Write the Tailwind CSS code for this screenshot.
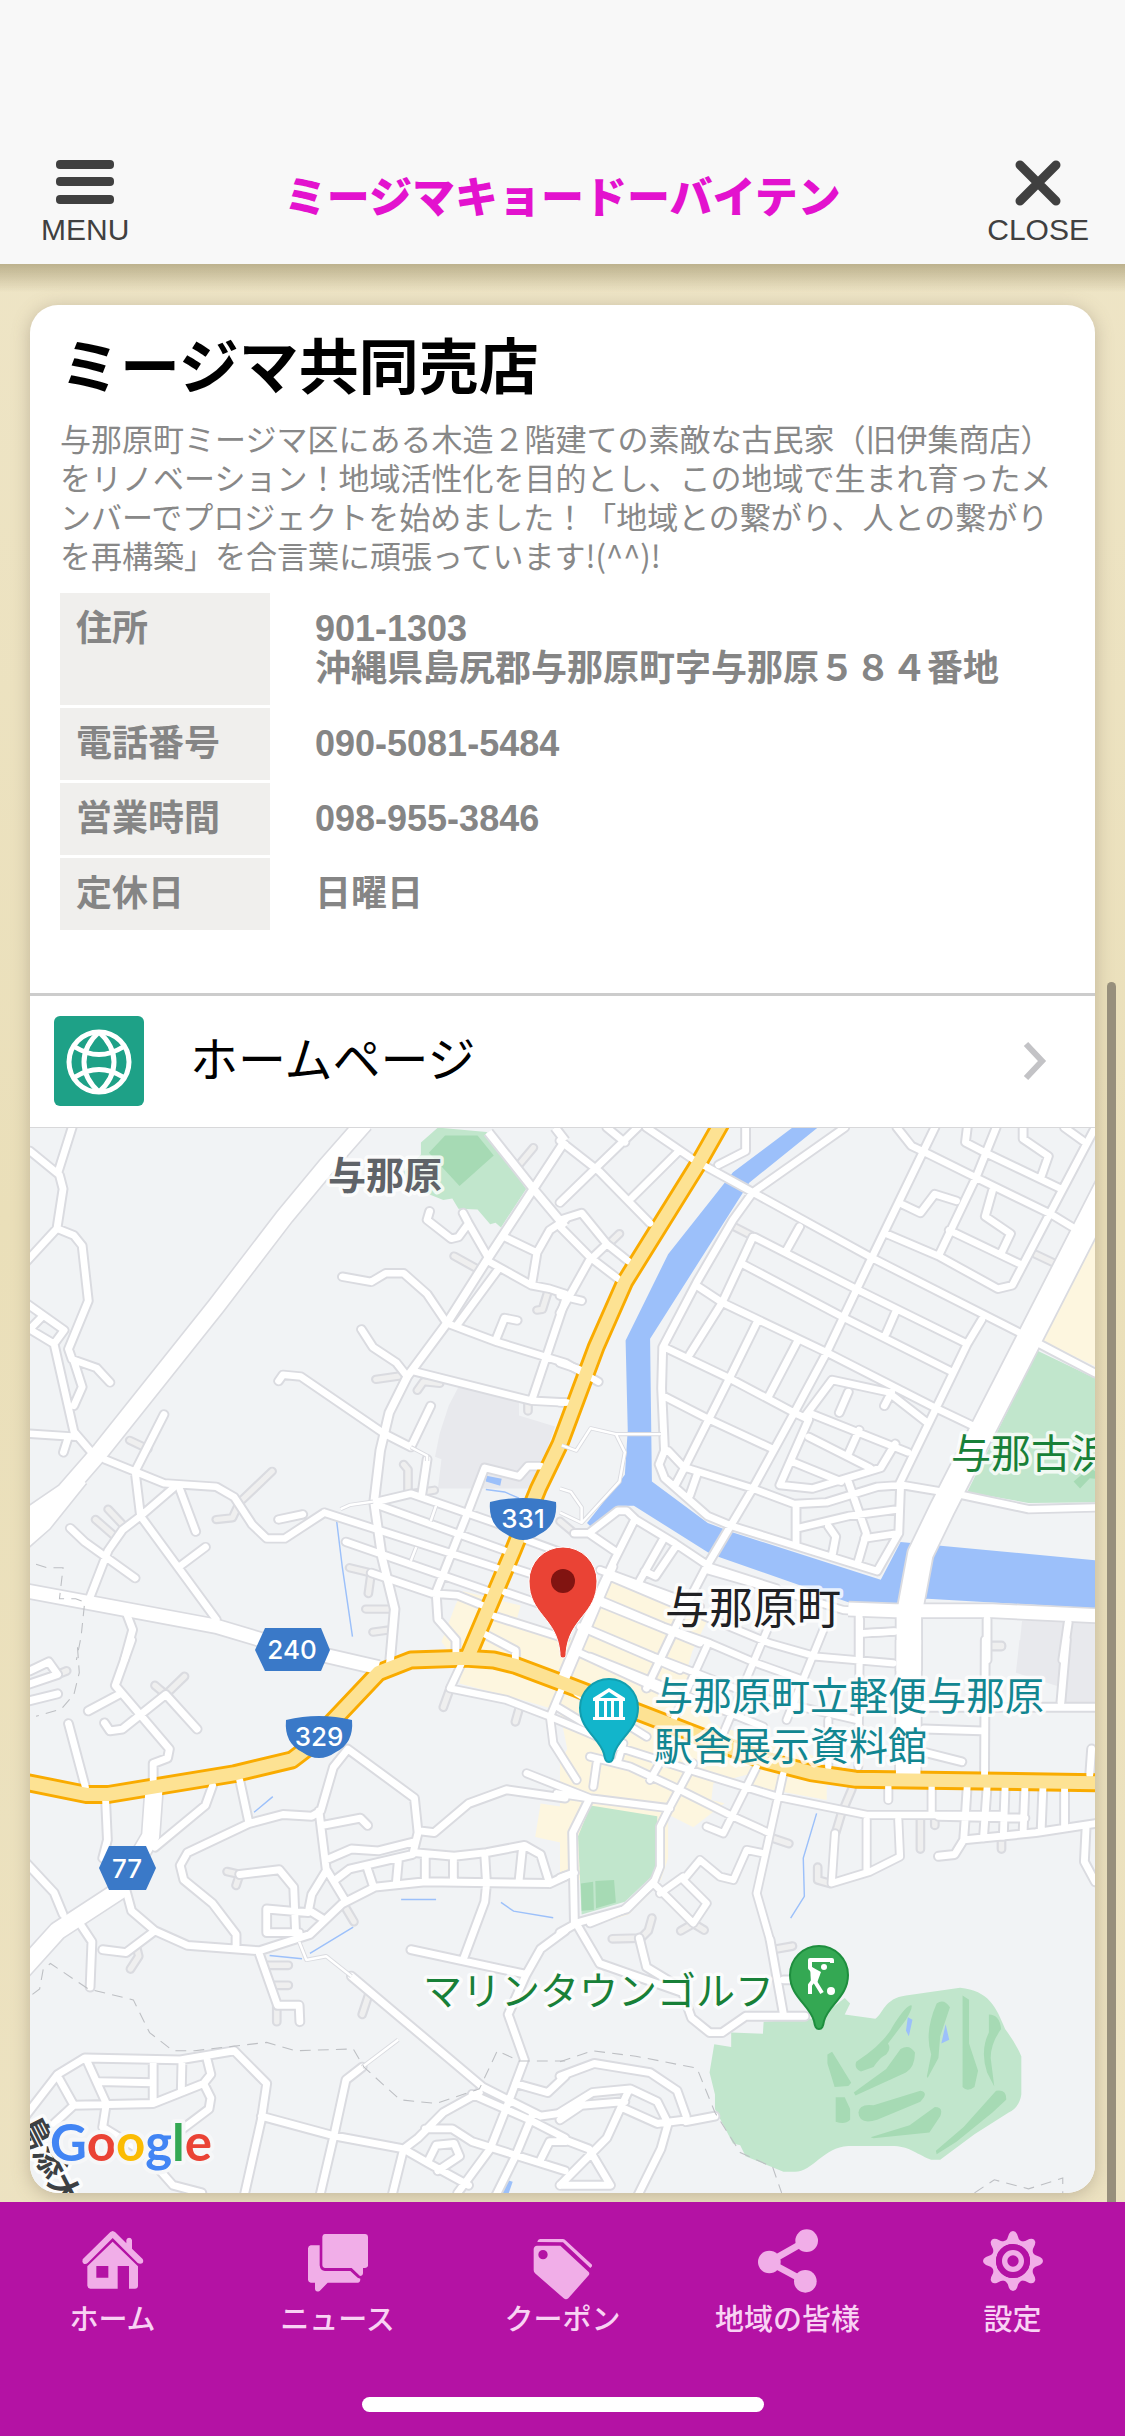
<!DOCTYPE html>
<html lang="ja">
  <head>
    <meta charset="utf-8">
    <meta name="viewport" content="width=device-width, initial-scale=1.0">
    <title>ミージマ共同売店</title>
    <script src="https://cdn.jsdelivr.net/npm/@tailwindcss/browser@4"></script>
  </head>

  <body class="min-h-screen bg-[#ece2c1] bg-linear-to-b from-[#efe6c9] via-[#eadfb9] to-[#ede3c3] font-['Liberation_Sans','Noto_Sans_CJK_JP',sans-serif]">

    <header class="fixed top-0 inset-x-0 z-10 h-[264px] bg-[#f8f8f8] flex items-end justify-between pl-[41px] pr-9 pb-4 text-[#404040]">
      <button type="button" class="flex flex-col items-center gap-1.5">
        <svg class="w-[58px] h-[46px]" viewBox="0 0 58 46" fill="currentColor"><rect y="0" width="58" height="9" rx="4"/><rect y="17" width="58" height="9" rx="4"/><rect y="35" width="58" height="9" rx="4"/></svg>
        <span class="text-[30px] leading-9">MENU</span>
      </button>
      <h1 class="mb-5 pl-2 text-[43px] leading-[60px] font-black text-[#e312ce]">ミージマキョードーバイテン</h1>
      <button type="button" class="flex flex-col items-center gap-1.5">
        <svg class="w-[46px] h-[46px]" viewBox="0 0 46 46" fill="none" stroke="currentColor" stroke-width="9" stroke-linecap="round"><path d="M5 5L41 41M41 5L5 41"/></svg>
        <span class="text-[30px] leading-9">CLOSE</span>
      </button>
      <div class="absolute top-full inset-x-0 h-7 bg-linear-to-b from-[#9b8f68]/60 to-transparent"></div>
    </header>

    <main class="pt-[305px] px-[30px] pb-[243px]">
      <article class="bg-white rounded-[28px] overflow-hidden shadow-[0_3px_18px_rgba(110,95,80,0.35)]">
        <div class="px-[30px] pt-7 pb-[60px]">
          <h2 class="text-[60px] leading-[72px] font-bold text-black">ミージマ共同売店</h2>
          <p class="mt-[13px] text-[31px] leading-[39px] text-[#888] whitespace-nowrap font-['Noto_Sans_CJK_JP',sans-serif]">与那原町ミージマ区にある木造２階建ての素敵な古民家（旧伊集商店）<br>をリノベーション！地域活性化を目的とし、この地域で生まれ育ったメ<br>ンバーでプロジェクトを始めました！「地域との繋がり、人との繋がり<br>を再構築」を合言葉に頑張っています!(^^)!</p>
          <table class="mt-4 w-full border-separate border-spacing-x-0 border-spacing-y-[3px] text-[36px] leading-10 text-[#858585] font-bold text-left">
            <tr>
              <th scope="row" class="w-[210px] bg-[#f0efed] px-4 py-4 align-top">住所</th>
              <td class="pl-[45px] py-4 whitespace-nowrap">901-1303<br>沖縄県島尻郡与那原町字与那原５８４番地</td>
            </tr>
            <tr>
              <th scope="row" class="bg-[#f0efed] px-4 py-4">電話番号</th>
              <td class="pl-[45px] py-4">090-5081-5484</td>
            </tr>
            <tr>
              <th scope="row" class="bg-[#f0efed] px-4 py-4">営業時間</th>
              <td class="pl-[45px] py-4">098-955-3846</td>
            </tr>
            <tr>
              <th scope="row" class="bg-[#f0efed] px-4 py-4">定休日</th>
              <td class="pl-[45px] py-4">日曜日</td>
            </tr>
          </table>
        </div>

        <a href="#homepage" class="flex items-center h-[135px] pl-6 pr-12 pb-0.5 border-t-3 border-t-[#ccc] border-b border-b-[#d8d8da] text-black">
          <svg class="w-[90px] h-[90px] rounded-md bg-[#1ea187]" viewBox="0 0 90 90" fill="none" stroke="#fff" stroke-width="5"><circle cx="45" cy="46" r="30"/><path d="M45 16C25 34 25 58 45 76M45 16C65 34 65 58 45 76M21 31Q45 46 69 31M21 61Q45 46 69 61"/></svg>
          <span class="ml-[46px] flex-1 text-[48px] leading-none">ホームページ</span>
          <svg class="w-6 h-10" viewBox="0 0 24 40" fill="none" stroke="#c3c3c6" stroke-width="6"><path d="M3 3L19 20L3 37"/></svg>
        </a>

        <svg class="block w-full aspect-square bg-[#f1f3f5]" viewBox="0 0 1065 1065" role="img" aria-label="地図">
          <defs>
            <g id="minor" fill="none" stroke-linecap="round" stroke-linejoin="round">
              <!-- north west -->
              <path transform="translate(-30 -8) scale(.3604 .3444)" d="M83 90L165 160L175 200L158 315L205 335L228 365L245 525L190 665L200 695L268 720L305 762M200 22L160 155M158 315L70 415M70 530L178 610L150 650L70 600M118 570L90 600M150 650L205 905L250 960M205 700L228 775L205 830M70 910L210 920M188 925L176 965M290 985L455 1055L600 1065L650 1095L700 1175L740 1215L790 1215L900 1140M455 855L375 1020L390 1150L600 1450M490 1060L390 1150L340 1190L300 1250L250 1385M195 1185L235 1225L375 1330M500 1075L543 1195M500 1295L570 1240M773 1160L840 1145M950 455L1030 470L1070 445L1120 445L1185 505L1240 590M1003 608L1035 660L1100 705L1130 745M773 758L785 740L835 745L1065 910L1140 950M1195 830L1140 950M1185 985L1170 1090M1385 430L1265 600M1192 265L1185 290L1252 345L1272 340L1300 300M1285 270L1300 300L1355 400M1400 340L1490 385L1475 480L1355 410M1475 480L1525 490L1568 505M1490 385L1525 320L1568 290M1568 525L1475 815M1240 590L1380 645L1568 705L1660 760M1375 640L1400 575L1435 582M1150 730L1475 815L1568 820M1040 1110L1140 1085L1430 1190M1040 1115L1400 1250M900 1140L1390 1305M960 1225L1360 1370M1030 1315L1200 1375L1270 1380L1340 1410M1500 1005L1465 1005L1440 1035L1345 1010L1290 1160L1210 1370L1215 1450L1265 1510L1265 1550M1420 1300L1568 1350M1400 1370L1568 1430M1370 1440L1568 1505M1340 1490L1430 1540L1430 1568M1450 1215L1568 1260M350 1430L368 1480L345 1568"/>
              <!-- north east -->
              <path transform="translate(530 -8) scale(.3604 .3444)" d="M790 22L535 210L480 290L380 470L285 660L282 780L290 960L275 1000L290 1040L410 1150L480 1180L880 1310L940 1200L945 1060M240 22L370 115L535 210L865 400L1280 620M540 340L820 490L1130 650M510 420L790 575L1085 730M385 485L450 530L740 675L1040 835L1150 890M290 660L470 750L650 850L690 870M285 800L415 870L590 955M350 1010L535 1070L650 1115L740 1110L880 1065L950 1060L1120 1090M935 22L975 75L1015 95L1160 170L1365 275L1420 310M1180 95L1390 200M1400 22L1450 60M905 330L1050 395L1215 490L1255 480L1350 290L1485 22M1080 320L1280 420M1040 22L865 400L740 675L650 850L535 1070L410 1290L340 1430L240 1650M1210 22L1155 165L1050 395M1170 580L1130 650L940 1060M535 340L450 530L360 680M550 580L470 750L345 1010L320 1060M660 640L580 800M665 310L625 385M930 560L905 620M680 860L755 755L910 790L1020 880M690 850L965 965M800 790L775 850M920 790L900 830M830 900L800 970M690 870L610 1060L700 1070L890 1010L930 940M640 990L780 1050M690 920L860 1010M800 1050L850 1200L825 1290M655 1115L655 1230M660 1185L800 1150L940 1130M745 1180L765 1210L755 1265M845 1215L940 1200M380 1030L360 1090M300 960L345 1010M950 245L1000 270L1040 215L1100 235M1200 205L1180 280L1250 330L1225 385M1130 22L1125 65L1180 95M1285 22L1285 55L1355 105L1335 165M1330 650L1485 735M1120 1090L1300 1130L1485 1125M0 60L110 150L250 300M215 22L0 240M330 90L200 225M130 22L180 65M0 290L60 270L130 360L190 410M0 310L85 400L160 460M130 360L80 410L0 560M0 510L60 525M0 705L55 725M0 820L20 820M515 22L515 90L440 130M80 1200L160 1135L185 1135L210 1160L320 1230L420 1300L600 1360M205 1165L150 1280L60 1480L0 1630M285 1220L220 1340M320 1240L265 1325L235 1310M40 1200L80 1200L150 1250M830 1440L830 1568M840 1490L930 1485M1185 1450L1185 1568M1410 1460L1395 1568"/>
              <!-- town centre -->
              <path transform="translate(560 432) scale(.3333)" d="M60 50L250 130L540 250L680 290L910 310M30 120L220 200L360 250L500 310L640 360M0 210L190 290L320 340L500 410L800 480M0 290L150 350L520 500M350 260L250 480M540 190L400 520M700 210L590 480M810 180L805 620M60 40L0 180M820 220L910 215M350 30L560 90L760 150L920 160M0 520L80 560L300 630L560 710L830 765L1240 765M0 590L120 620L270 690L430 770L540 820M-100 700L0 715L240 745M310 610L240 740L210 800L210 920L190 970L100 1050L0 1090M500 620L400 820L350 800M580 640L540 820L500 1000L540 1140M220 590L180 660M100 550L85 600M20 610L10 680M190 970L310 1090L350 1030L280 960L330 900L390 950L430 960L470 870L520 880M210 1000L280 950M735 820L725 970L840 935L930 890L925 780M830 780L830 930M1025 680L1025 760M895 680L895 720M715 480L715 620M-100 440L0 500M-190 640L0 715"/>
              <!-- below route 331 -->
              <path transform="translate(350 332) scale(.3333)" d="M250 600L210 685L380 720L510 770L630 820M700 320L510 770L520 850L590 960M590 700L800 830M660 330L960 440M640 420L960 550M600 500L900 630M580 570L840 690"/>
              <!-- south west -->
              <path transform="translate(-30 512) scale(.3604 .3635)" d="M365 0L320 125L470 300L465 325L425 340L425 385M245 195L330 150M290 228L305 250L340 245L460 150L547 245M190 230L237 405M83 85L135 60L160 95L70 125M70 170L160 148M293 440L298 550L285 600M590 400L570 455L430 570M665 385L690 500M655 840L655 810L590 725L510 660L500 620L520 585L690 505L785 480L865 485L890 470L925 350L965 300L1150 435L1160 530L1145 590L970 630L930 660M1165 525L1205 530L1300 450L1405 412L1568 435M885 470L905 630L960 720M895 510L1000 490L1020 510M905 605L975 575L1050 580L1150 555M1150 585L1260 595L1350 585L1455 565L1500 590L1525 670L1180 665L1040 680L950 725L860 810L720 855L520 840L430 800L365 745L350 690M1020 630L1035 675M1105 610L1100 665M1180 590V665M1258 595V665M1345 590L1350 670M1450 570L1440 665M1525 670L1568 650M905 635L865 700L855 750L740 740L740 805L830 805M665 645L775 632L815 680L820 800M860 745L900 770M1350 670L1345 720L1285 880M1140 852L1460 920L1500 850L1568 800M1460 920L1410 1030L1455 1155L1400 1300L1360 1400L1270 1521M430 800L350 860L285 852M70 610L150 695L175 755M215 770L255 830L250 955M720 865L770 1005L830 1005L832 1050M975 925L1340 1230M1005 1175L960 1210L925 1370L885 1540M70 1310L160 1195L235 1150L500 1155L650 1130L740 1220L725 1320L675 1540M725 1310L930 1365L1120 1400L1190 1440L1300 1500M160 1200L205 1280L425 1275L565 1220L585 1260L580 1290L500 1350M575 1155L585 1195L565 1220M505 1155L503 1240M425 1160V1275M240 1155L295 1275L285 1340M275 1215L425 1218M205 1280L150 1330M285 1340L400 1410L480 1500L560 1521M1340 1230L1500 1310L1568 1300M1330 1245L1230 1300L1160 1370L1120 1400L1085 1540M1310 1250L1470 1320L1568 1370M1180 1345L1255 1345L1310 1380L1568 1460M1190 1430L1210 1390L1260 1385L1275 1420L1215 1460M1480 1300L1430 1420L1370 1540M1430 1220L1520 1245L1568 1200M1500 1430L1525 1380L1568 1380"/>
              <!-- south east -->
              <path transform="translate(530 512) scale(.3604 .3635)" d="M1130 400L1125 480L1120 550L1095 590L1050 595M1120 550L1320 530L1485 505M1050 485L1290 490M1185 405L1175 545M1235 405L1230 540M1290 405L1285 530M1340 405L1335 525M1400 405V515M1460 510L1455 610L1485 665M1180 0L1178 370M1405 0L1390 170M1010 185H1490M1010 245L1170 250M1015 310L1115 335M1475 300L1470 370M80 440L35 530L40 780L185 740L260 665M0 655L40 640M0 805L45 780L110 890L340 970L365 1040L415 1080L450 1080L515 1035L680 1035M220 820L240 900L340 960M583 825L620 1030M620 935H650M0 1200L95 1165L250 1190L325 1240L350 1310M350 1325L430 1310M0 1300L90 1245L195 1235L270 1270L300 1330L280 1400L210 1540M190 1240L130 1370L0 1500M0 1370L80 1400L140 1500L0 1500M180 1290L270 1330L350 1320M0 1320L60 1280L180 1270"/>
            </g>
            <g id="local" fill="none" stroke-linejoin="round">
              <path transform="translate(-30 -8) scale(.3604 .3444)" d="M1568 60L1480 200L1355 400L1240 590L1130 745L1080 850L1055 960L1038 1110L1060 1270L1095 1420L1080 1600M1355 35L1480 200L1568 310M1540 22L1568 60"/>
            </g>
            <g id="alleys" fill="none" stroke-linecap="round" stroke-linejoin="round">
              <path transform="translate(-30 -8) scale(.3604 .3444)" d="M1260 395L1320 430M1480 80L1440 130M1520 500L1505 550L1490 552M1043 753L1130 740M1158 785L1175 760L1220 765M755 1020L665 1110L645 1155L600 1160M360 930L410 955M1120 1000L1132 1015V1080M1205 1075L1140 1085M300 1130L345 1180M265 1160L320 1210M970 1300L1030 1315L1022 1375M1015 1420H1090M1035 1487L1085 1480M1465 820V845"/>
              <path transform="translate(-30 512) scale(.3604 .3635)" d="M430 125L460 150L512 100M1250 130L1230 185M1440 190L1430 225M630 637L665 645L655 675M380 850L385 870L362 905M740 895H800M760 950H800M768 1005V1050M1025 970L1005 1030M955 730L982 775M160 95L185 85"/>
              <path transform="translate(530 512) scale(.3604 .3635)" d="M145 822L225 820L245 800L255 765M335 800L370 780L400 798M590 545L635 560M600 850L645 842M715 625V660L750 670M1000 490V575M1040 490V510M1225 550V575M1200 18H1225M810 410L780 480L765 530"/>
              <path transform="translate(530 -8) scale(.3604 .3444)" d="M165 330L130 365M1200 1525H1225M480 308L540 340M1320 390L1370 415M40 1200L0 1165"/>
            </g>
            <g id="prefectural" fill="none" stroke-linejoin="round">
              <path transform="translate(-30 -8) scale(.3604 .3444)" d="M60 1365L600 1470L760 1520L1050 1590"/>
              <path transform="translate(530 -8) scale(.3604 .3444)" d="M800 1420L930 1425L1200 1425L1500 1440"/>
            </g>
            <g id="major" fill="none" stroke-linejoin="round">
              <path transform="translate(-30 -8) scale(.3604 .3444)" d="M1010 10L905 135L790 280L600 540L280 960L180 1080L60 1165M220 1040L120 1170L60 1225"/>
              <path transform="translate(-30 512) scale(.3604 .3635)" d="M428 400L418 540L330 690L160 800L60 910"/>
            </g>
            <g id="avenue" fill="none" stroke-linejoin="round">
              <path transform="translate(530 -8) scale(.3604 .3444)" d="M1520 190L1300 640L1060 1130L1000 1260L968 1440L968 1600"/>
              <path transform="translate(530 512) scale(.3604 .3635)" d="M968 0L966 390"/>
            </g>
            <g id="route" fill="none" stroke-linejoin="round">
              <path transform="translate(530 -8) scale(.3604 .3444)" d="M450 5L385 125L180 470L100 660L0 940L-60 1070L-130 1250L-260 1570"/>
              <path transform="translate(-30 512) scale(.3604 .3635)" d="M60 389L240 425L300 425L650 368L810 330L850 300L1050 90L1140 55L1290 50L1370 55L1430 70L1554 116L1774 200L2114 330L2250 365L2374 383L3070 393"/>
            </g>
            <g id="footpaths" fill="none" stroke-linejoin="round">
              <path transform="translate(530 -8) scale(.3604 .3444)" d="M5 945L45 960L85 895L155 912H280M155 912L180 965L165 1050L60 1170L0 1140M0 1070L30 1080L60 1125V1170"/>
              <path transform="translate(-30 512) scale(.3604 .3635)" d="M830 830L850 880L905 870L975 925M1105 1100L1005 1175"/>
              <path transform="translate(-30 -8) scale(.3604 .3444)" d="M945 1130L970 1118L1035 1108M1140 950L1185 975V990M1210 1120L1195 1165M1155 1240L1140 1280"/>
            </g>
            <path id="poi" d="M0 54C-3 54-4 52-5 46C-9 30-29 22-29 0A29 29 0 1 1 29 0C29 22 9 30 5 46C4 52 3 54 0 54Z"/>
            <path id="national" d="M-33-17Q0-25 33-17Q35 6 17 15Q0 27-17 15Q-35 6-33-17Z"/>
          </defs>

          <!-- parks, shops, blocks -->
          <g transform="translate(-30 -8) scale(.3604 .3444)">
            <path fill="#c1e6cc" d="M1215 22L1350 35L1460 200L1390 312L1375 298L1360 303L1325 260L1272 258L1255 228L1230 232L1130 190L1120 150L1168 100V65Z"/>
            <path fill="#a6dab4" d="M1190 95L1235 45H1325L1370 103L1275 192Z"/>
            <path fill="#e8e9ed" d="M1272 775L1440 820V858L1540 890L1480 1070H1215L1225 985L1207 978L1220 910L1245 830Z"/>
            <path fill="#9cc0fa" d="M1350 1033L1392 1042L1388 1062L1348 1050Z"/>
            <path fill="#fdf6df" d="M1285 1368L1445 1410L1435 1445L1568 1500V1640L1300 1620L1225 1515L1265 1405Z"/>
          </g>
          <g transform="translate(530 -8) scale(.3604 .3444)">
            <path fill="#9cc0fa" d="M645 22H715L525 182L250 635L255 1050L410 1170L480 1198L890 1335L945 1225L1485 1278V1418L1020 1390L935 1410L800 1400L445 1270L410 1255L205 1120H160L85 1180L75 1170L180 1030L188 900L182 640L300 390L480 152Z"/>
            <path fill="#fdf6df" d="M1485 335V715L1335 640ZM140 1330L410 1450L340 1600H0L60 1450Z"/>
            <path fill="#c1e6cc" d="M1325 670L1485 750V1110L1300 1112L1130 1080Z"/>
            <path fill="#a6dab4" d="M1425 1050L1470 1010L1485 1020V1042L1470 1040L1443 1070Z"/>
            <path fill="#e8e9ed" d="M1282 1455H1485V1580H1270Z"/>
          </g>
          <g transform="translate(530 512) scale(.3604 .3635)">
            <path fill="#fdf6df" d="M0 0H300L370 20L350 90L420 230L740 330V440L520 400L370 515L300 480V600L280 660H0V340L20 300L0 200Z"/>
            <path fill="#fdf6df" d="M80 790L200 745L270 680L190 755Z"/>
            <path fill="#f1f3f5" d="M425 395L520 370L560 440L500 460L420 440Z"/>
            <path fill="#e8e9ed" d="M1275 0H1485V180H1390V130L1265 90Z"/>
            <path fill="#c1e6cc" d="M85 455L270 485L265 640L180 720L60 755L50 540Z"/>
            <path fill="#a6dab4" d="M58 670L92 665L94 742L60 745ZM98 663L150 660L155 722L100 738Z"/>
            <path fill="#c1e6cc" d="M565 1050L720 1040L790 985L805 1000L790 1030L875 1042C895 1030 900 985 960 978L1110 957C1190 965 1210 1010 1235 1070Q1265 1110 1280 1145V1250Q1275 1285 1245 1300L1150 1360L1055 1430H1030C980 1410 970 1392 920 1392H800C730 1395 700 1465 650 1463H620L515 1420L500 1390L480 1385L430 1290V1250L415 1190L428 1112L475 1120V1080L563 1083Z"/>
            <path fill="#a6dab4" d="M755 1133L808 1218L800 1227L762 1230L742 1165V1140ZM975 1005Q980 1010 960 1045L910 1110Q920 1125 905 1140Q885 1150 870 1175L835 1187Q815 1180 822 1160Q900 1110 925 1060Q960 1005 975 1005ZM815 1245L905 1180L945 1125Q970 1110 985 1135Q985 1175 960 1190L820 1253ZM765 1258L790 1258L805 1290V1320Q790 1335 765 1325ZM828 1300Q830 1275 870 1280L1000 1240Q1025 1245 1000 1270L880 1320Q830 1335 828 1300ZM862 1368L970 1335L1040 1285Q1065 1285 1055 1310L1025 1355L870 1371ZM1045 1000Q1065 985 1082 1010L1055 1090L1050 1150L1020 1205L1018 1200L1030 1140Q1010 1080 1045 1000ZM1117 978L1135 990V1110L1160 1185L1150 1230Q1130 1245 1117 1230ZM1190 1030Q1220 1030 1224 1070Q1195 1110 1195 1150L1205 1228L1185 1190Q1165 1130 1190 1080ZM1210 1240Q1240 1235 1238 1265L1200 1300L1100 1380L1045 1415L1043 1405L1120 1340Z"/>
            <path fill="#9cc0fa" d="M965 1038L978 1045L968 1090L960 1075ZM1070 1057L1080 1100L1058 1110Z"/>
          </g>
          <path fill="#fdf6df" transform="translate(-30 512) scale(.3604 .3635)" d="M1285 65L1568 130V200L1450 165L1275 120ZM1500 450L1568 460V560L1485 542Z"/>
          <path fill="#f1f3f5" transform="translate(560 432) scale(.3333)" d="M360 160L1140 200V420L680 340L330 330Z"/>

          <!-- streams -->
          <g fill="none" stroke="#9cc0fa" stroke-width="4">
            <path transform="translate(-30 -8) scale(.3604 .3444)" d="M933 1155L950 1300L978 1500M1348 1073L1400 1080L1440 1098"/>
            <path transform="translate(-30 512) scale(.3604 .3635)" d="M705 474L757 431M1113 714H1210M1390 722L1425 746L1535 764M748 868L838 877M860 862L980 790"/>
            <path transform="translate(530 512) scale(.3604 .3635)" d="M712 477L675 600L678 705L640 765"/>
            <path transform="translate(-30 512) scale(.3604 .3635)" stroke-width="16" d="M1415 1488L1402 1525"/>
          </g>

          <use href="#alleys" stroke="#dadbe0" stroke-width="27"/>
          <use href="#alleys" stroke="#efefef" stroke-width="15"/>
          <use href="#minor" stroke="#dadbe0" stroke-width="30"/>
          <use href="#local" stroke="#dadbe0" stroke-width="32"/>
          <use href="#prefectural" stroke="#dadbe0" stroke-width="48"/>
          <use href="#major" stroke="#dadbe0" stroke-width="56"/>
          <use href="#avenue" stroke="#dadbe0" stroke-width="78"/>
          <use href="#route" stroke="#f9ab00" stroke-width="52"/>
          <use href="#minor" stroke="#fff" stroke-width="19"/>
          <use href="#local" stroke="#fff" stroke-width="21"/>
          <use href="#prefectural" stroke="#fff" stroke-width="38"/>
          <use href="#major" stroke="#fff" stroke-width="47"/>
          <use href="#avenue" stroke="#fff" stroke-width="68"/>
          <use href="#route" stroke="#fde293" stroke-width="36"/>
          <use href="#footpaths" stroke="#dadbe0" stroke-width="12"/>
          <use href="#footpaths" stroke="#fff" stroke-width="7"/>

          <!-- boundaries -->
          <g fill="none" stroke="#bdbfc3" stroke-width="3" stroke-dasharray="30 20">
            <path transform="translate(-30 -8) scale(.3604 .3444)" d="M100 1290L130 1300H175L165 1390H210L235 1400L225 1500L212 1568"/>
            <path transform="translate(-30 512) scale(.3604 .3635)" d="M215 20L220 90L205 150L170 190L100 210M90 975L110 960L120 905L140 890L245 960L370 990L415 1080L480 1130H540L740 1107L820 1130L980 1125L1010 1175L1110 1265L1210 1275L1330 1235L1380 1130L1440 1158H1568"/>
            <path transform="translate(530 512) scale(.3604 .3635)" d="M0 1160L90 1130L210 1145L380 1178L430 1300L500 1410L590 1450L615 1521M1150 1521L1205 1485L1300 1510L1395 1480V1521"/>
          </g>

          <!-- route shields -->
          <g fill="#3a79c8">
            <use href="#national" x="493" y="391"/>
            <use href="#national" x="289" y="609"/>
            <path d="M235 500H291L300 522L291 543H235L225 522Z"/>
            <path d="M79 718H116L126 740L116 762H79L69 740Z"/>
          </g>
          <g fill="#fff" text-anchor="middle" class="font-[Inter,Roboto,sans-serif] font-medium text-[26px]">
            <text x="493" y="400">331</text>
            <text x="289" y="618">329</text>
            <text x="262" y="531">240</text>
            <text x="97" y="750">77</text>
          </g>

          <!-- place names -->
          <g class="font-['Noto_Sans_CJK_JP',sans-serif]" stroke="#fff" stroke-opacity=".8" stroke-width="7" stroke-linejoin="round" paint-order="stroke">
            <text x="298" y="61" fill="#5f6368" class="text-[38px] font-bold">与那原</text>
            <text x="921" y="340" fill="#188038" class="text-[40px]">与那古浜</text>
            <text x="635" y="496" fill="#202124" class="text-[44px]">与那原町</text>
            <text x="624" y="582" fill="#128691" class="text-[39px]">与那原町立軽便与那原</text>
            <text x="624" y="632" fill="#128691" class="text-[39px]">駅舎展示資料館</text>
            <text x="393" y="877" fill="#188038" class="text-[39px]">マリンタウンゴルフ</text>
            <text transform="translate(-12 996) rotate(63)" fill="#3c4043" class="text-[32px] font-bold">島添大</text>
          </g>

          <!-- pins -->
          <g transform="translate(533 453)">
            <path fill="#ea4335" stroke="#fff" stroke-width="1" d="M0 77C-3 77-3 74-3 72C-6 36-34 34-34 0A34 34 0 1 1 34 0C34 34 6 36 3 72C3 74 3 77 0 77Z"/>
            <circle r="12" fill="#811411"/>
          </g>
          <g transform="translate(579 580)">
            <use href="#poi" fill="#12b5cb" stroke="#129eaf" stroke-width="2"/>
            <path d="M0-20L16-10V-7H-16V-10ZM-14-7H-10V9H-14ZM-5-7H-2V9H-5ZM2-7H5V9H2ZM10-7H14V9H10ZM-16 9H16V12H-16Z" fill="#fff"/>
            <path d="M0-16L9-10H-9Z" fill="#12b5cb"/>
          </g>
          <g transform="translate(789 847)">
            <use href="#poi" fill="#34a853" stroke="#1e8e3e" stroke-width="2"/>
            <path d="M13-12V-15H-9V-7L-4-2L-6 6L-9 10V19M-5 5L3 18" fill="none" stroke="#fff" stroke-width="4" stroke-linejoin="round"/>
            <path fill="#fff" d="M-9-9L2-3L-2 8L-8 8Z"/>
            <circle cx="5" cy="-8" r="3" fill="#fff"/><circle cx="12" cy="16" r="4" fill="#fff"/>
          </g>

          <text x="20" y="1033" stroke="#f6f7f8" stroke-width="8" stroke-linejoin="round" paint-order="stroke" class="font-[Lato,sans-serif] font-bold text-[51px]"><tspan fill="#4285f4">G</tspan><tspan fill="#ea4335">o</tspan><tspan fill="#fbbc04">o</tspan><tspan fill="#4285f4">g</tspan><tspan fill="#34a853">l</tspan><tspan fill="#ea4335">e</tspan></text>
        </svg>
      </article>
    </main>

    <!-- scroll thumb -->
    <div class="fixed right-[9px] top-[982px] bottom-[234px] w-[9px] rounded-t-full bg-[#978f7c]"></div>

    <nav class="fixed bottom-0 inset-x-0 h-[234px] bg-[#b412a4] pt-[26px] text-[29px] leading-10 font-medium text-[#f9d2f4]">
      <ul class="grid grid-cols-5">
        <li>
          <a href="#home" class="flex flex-col items-center">
            <svg class="w-[72px] h-[72px]" viewBox="56 36 216 216" fill="#f1aee8"><path d="M163 45L156 48L73 130Q70 138 76 143Q82 146 88 141L163 66L238 141Q246 146 253 141Q257 135 253 129L221 98V72Q219 65 212 65Q205 66 204 72V82L170 48Z"/><path fill-rule="evenodd" d="M163 77L239 151V210Q238 218 230 218H212V150H178V218H96Q88 217 87 209V151ZM114 150V185H150V150Z"/></svg>
            ホーム
          </a>
        </li>
        <li>
          <a href="#news" class="flex flex-col items-center">
            <svg class="w-[72px] h-[72px]" viewBox="723 36 216 216" fill="#f1aee8"><path d="M791 54H913Q921 55 921 62V149Q920 156 906 156V172Q905 180 897 180L872 156H791Q784 155 784 148V62Q785 55 791 54Z"/><path d="M776 88V148Q778 165 792 165H868L890 185L898 188Q898 200 890 200H800L776 225Q764 230 762 220V200H749Q742 199 741 192V97Q742 89 749 88Z"/></svg>
            ニュース
          </a>
        </li>
        <li>
          <a href="#coupon" class="flex flex-col items-center">
            <svg class="w-[72px] h-[72px]" viewBox="1400 36 216 216" fill="#f1aee8"><path fill-rule="evenodd" d="M1430 89H1500L1585 168Q1589 173 1585 178L1524 247Q1517 253 1510 247L1424 172Q1420 168 1420 162V99Q1421 90 1430 89ZM1448 102A14 14 0 1 0 1448 130A14 14 0 1 0 1448 102Z"/><path d="M1431 78Q1433 69 1440 69H1508Q1513 70 1517 74L1595 146V151L1590 156L1508 79Z"/></svg>
            クーポン
          </a>
        </li>
        <li>
          <a href="#community" class="flex flex-col items-center">
            <svg class="w-[72px] h-[72px]" viewBox="574 36 216 216" fill="#f1aee8"><path d="M738 74L625 138L733 196" fill="none" stroke="#f1aee8" stroke-width="20"/><circle cx="738" cy="74" r="34"/><circle cx="626" cy="138" r="34"/><circle cx="734" cy="196" r="34"/></svg>
            地域の皆様
          </a>
        </li>
        <li>
          <a href="#settings" class="flex flex-col items-center">
            <svg class="w-[72px] h-[72px]" viewBox="-108 -99 216 216" fill="#f1aee8">
              <defs><path id="tooth" d="M-26-56Q-15-66-12-81Q-8-90 0-90Q8-90 12-81Q15-66 26-56Z"/></defs>
              <use href="#tooth"/><use href="#tooth" transform="rotate(45)"/><use href="#tooth" transform="rotate(90)"/><use href="#tooth" transform="rotate(135)"/><use href="#tooth" transform="rotate(180)"/><use href="#tooth" transform="rotate(225)"/><use href="#tooth" transform="rotate(270)"/><use href="#tooth" transform="rotate(315)"/>
              <circle r="58" fill="none" stroke="#f1aee8" stroke-width="14"/><circle r="44" fill="none" stroke="#b412a4" stroke-width="14"/><circle r="25" fill="none" stroke="#f1aee8" stroke-width="16"/>
            </svg>
            設定
          </a>
        </li>
      </ul>
      <div class="absolute bottom-6 left-1/2 -translate-x-1/2 w-[402px] h-[15px] rounded-full bg-white"></div>
    </nav>
  </body>
</html>
